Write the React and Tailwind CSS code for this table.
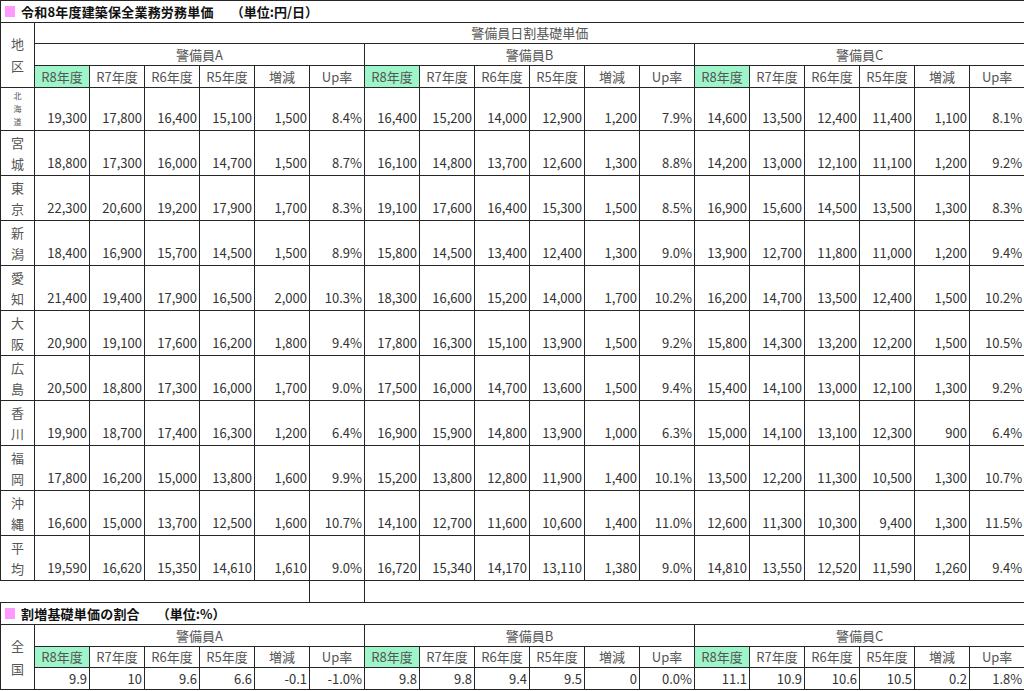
import React from "react";

const years = ["R8年度", "R7年度", "R6年度", "R5年度", "増減", "Up率"];
const groups = ["警備員A", "警備員B", "警備員C"];

const rows = [
  { name: ["北", "海", "道"], small: true, v: ["19,300", "17,800", "16,400", "15,100", "1,500", "8.4%", "16,400", "15,200", "14,000", "12,900", "1,200", "7.9%", "14,600", "13,500", "12,400", "11,400", "1,100", "8.1%"] },
  { name: ["宮", "城"], v: ["18,800", "17,300", "16,000", "14,700", "1,500", "8.7%", "16,100", "14,800", "13,700", "12,600", "1,300", "8.8%", "14,200", "13,000", "12,100", "11,100", "1,200", "9.2%"] },
  { name: ["東", "京"], v: ["22,300", "20,600", "19,200", "17,900", "1,700", "8.3%", "19,100", "17,600", "16,400", "15,300", "1,500", "8.5%", "16,900", "15,600", "14,500", "13,500", "1,300", "8.3%"] },
  { name: ["新", "潟"], v: ["18,400", "16,900", "15,700", "14,500", "1,500", "8.9%", "15,800", "14,500", "13,400", "12,400", "1,300", "9.0%", "13,900", "12,700", "11,800", "11,000", "1,200", "9.4%"] },
  { name: ["愛", "知"], v: ["21,400", "19,400", "17,900", "16,500", "2,000", "10.3%", "18,300", "16,600", "15,200", "14,000", "1,700", "10.2%", "16,200", "14,700", "13,500", "12,400", "1,500", "10.2%"] },
  { name: ["大", "阪"], v: ["20,900", "19,100", "17,600", "16,200", "1,800", "9.4%", "17,800", "16,300", "15,100", "13,900", "1,500", "9.2%", "15,800", "14,300", "13,200", "12,200", "1,500", "10.5%"] },
  { name: ["広", "島"], v: ["20,500", "18,800", "17,300", "16,000", "1,700", "9.0%", "17,500", "16,000", "14,700", "13,600", "1,500", "9.4%", "15,400", "14,100", "13,000", "12,100", "1,300", "9.2%"] },
  { name: ["香", "川"], v: ["19,900", "18,700", "17,400", "16,300", "1,200", "6.4%", "16,900", "15,900", "14,800", "13,900", "1,000", "6.3%", "15,000", "14,100", "13,100", "12,300", "900", "6.4%"] },
  { name: ["福", "岡"], v: ["17,800", "16,200", "15,000", "13,800", "1,600", "9.9%", "15,200", "13,800", "12,800", "11,900", "1,400", "10.1%", "13,500", "12,200", "11,300", "10,500", "1,300", "10.7%"] },
  { name: ["沖", "縄"], v: ["16,600", "15,000", "13,700", "12,500", "1,600", "10.7%", "14,100", "12,700", "11,600", "10,600", "1,400", "11.0%", "12,600", "11,300", "10,300", "9,400", "1,300", "11.5%"] },
  { name: ["平", "均"], v: ["19,590", "16,620", "15,350", "14,610", "1,610", "9.0%", "16,720", "15,340", "14,170", "13,110", "1,380", "9.0%", "14,810", "13,550", "12,520", "11,590", "1,260", "9.4%"] },
];

const ratio = ["9.9", "10", "9.6", "6.6", "-0.1", "-1.0%", "9.8", "9.8", "9.4", "9.5", "0", "0.0%", "11.1", "10.9", "10.6", "10.5", "0.2", "1.8%"];

const cell = "border border-[#262626]";

function Cols() {
  return (
    <colgroup>
      <col className="w-[34px]" />
      {Array.from({ length: 18 }).map((_, i) => (
        <col key={i} className="w-[55px]" />
      ))}
    </colgroup>
  );
}

function Title({ text, unit }) {
  return (
    <td colSpan={19} className={`${cell} text-left align-middle`}>
      <div className="flex items-center font-bold text-[13px] text-[#111] leading-none">
        <span className="inline-block w-[10px] h-[11px] bg-[#ff99ff] ml-[4px] mr-[6px]" />
        <span className="tracking-[0.2px]">{text}</span>
        <span className="ml-[17px]">{unit}</span>
      </div>
    </td>
  );
}

function YearCells() {
  return groups.map((g) =>
    years.map((y, i) => (
      <td
        key={g + y}
        className={`${cell} text-center align-middle ${i === 0 ? "bg-[#9ef5c9]" : ""}`}
      >
        {y}
      </td>
    ))
  );
}

function GroupCells() {
  return groups.map((g) => (
    <td key={g} colSpan={6} className={`${cell} text-center align-middle`}>
      {g}
    </td>
  ));
}

export default function App() {
  return (
    <div className="w-[1024px] bg-white font-['Noto_Sans_CJK_JP',sans-serif] text-[13px] leading-[18px] text-[#555]">
      <table className="table-fixed border-collapse w-[1024px]">
        <Cols />
        <tbody>
          <tr className="h-[22px]">
            <Title text="令和8年度建築保全業務労務単価" unit="（単位:円/日）" />
          </tr>
          <tr className="h-[21px]">
            <td rowSpan={3} className={`${cell} text-center align-middle leading-[22px]`}>
              地<br />区
            </td>
            <td colSpan={18} className={`${cell} text-center align-middle`}>
              警備員日割基礎単価
            </td>
          </tr>
          <tr className="h-[22px]">
            <GroupCells />
          </tr>
          <tr className="h-[22px]">
            <YearCells />
          </tr>
          {rows.map((r, ri) => (
            <tr key={ri} className={ri === 0 ? "h-[43px]" : "h-[45px]"}>
              <td className={`${cell} text-center align-top`}>
                {r.small ? (
                  <div className="flex flex-col items-center pt-[1px] text-[8px] leading-[13px]">
                    {r.name.map((c) => (
                      <span key={c}>{c}</span>
                    ))}
                  </div>
                ) : (
                  <div className="flex flex-col items-center pt-[1px] leading-[21px]">
                    {r.name.map((c) => (
                      <span key={c}>{c}</span>
                    ))}
                  </div>
                )}
              </td>
              {r.v.map((v, i) => (
                <td key={i} className={`${cell} text-right align-bottom pr-[2px] pb-[3px] text-[#333]`}>
                  {v}
                </td>
              ))}
            </tr>
          ))}
          <tr className="h-[22px]">
            <td colSpan={6} className="border-b border-[#262626]" />
            <td className={cell} />
            <td colSpan={12} className="border-b border-[#262626]" />
          </tr>
          <tr className="h-[22px]">
            <Title text="割増基礎単価の割合" unit="（単位:%）" />
          </tr>
          <tr className="h-[22px]">
            <td rowSpan={3} className={`${cell} text-center align-middle leading-[23px]`}>
              全<br />国
            </td>
            <GroupCells />
          </tr>
          <tr className="h-[21px]">
            <YearCells />
          </tr>
          <tr className="h-[22px]">
            {ratio.map((v, i) => (
              <td key={i} className={`${cell} text-right align-middle pr-[2px] text-[#333]`}>
                {v}
              </td>
            ))}
          </tr>
        </tbody>
      </table>
    </div>
  );
}
